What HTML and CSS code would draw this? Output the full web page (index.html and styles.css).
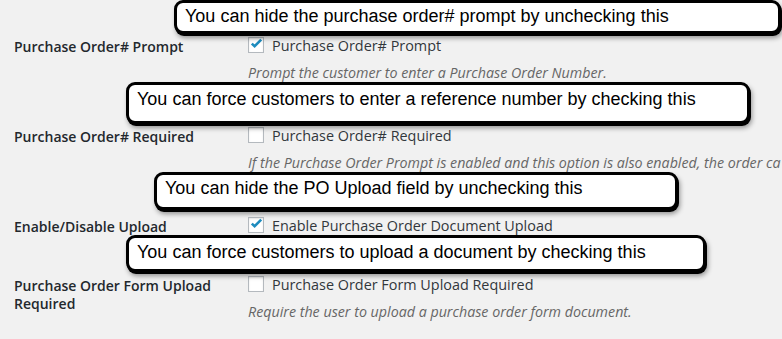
FILE: index.html
```html
<!DOCTYPE html>
<html lang="en">
<head>
    <meta charset="UTF-8">
    <meta name="viewport" content="width=device-width, initial-scale=1.0">
    <title>Purchase Order Settings</title>
    <link rel="stylesheet" href="styles.css">
</head>
<body>
    <div class="page">

        <div class="row">
            <div class="row-label">Purchase Order# Prompt</div>
            <div class="row-field">
                <label class="check">
                    <span class="box checked">
                        <svg viewBox="0 0 16 16" width="16" height="16"><polyline points="3.8,5.6 6.6,8.2 13.2,1.6" fill="none" stroke="#1e8cbe" stroke-width="2.6"/></svg>
                    </span>
                    Purchase Order# Prompt
                </label>
                <p class="desc">Prompt the customer to enter a Purchase Order Number.</p>
            </div>
        </div>

        <div class="row">
            <div class="row-label">Purchase Order# Required</div>
            <div class="row-field">
                <label class="check">
                    <span class="box"></span>
                    Purchase Order# Required
                </label>
                <p class="desc">If the Purchase Order Prompt is enabled and this option is also enabled, the order ca</p>
            </div>
        </div>

        <div class="row row-short">
            <div class="row-label">Enable/Disable Upload</div>
            <div class="row-field">
                <label class="check">
                    <span class="box checked">
                        <svg viewBox="0 0 16 16" width="16" height="16"><polyline points="3.8,5.6 6.6,8.2 13.2,1.6" fill="none" stroke="#1e8cbe" stroke-width="2.6"/></svg>
                    </span>
                    Enable Purchase Order Document Upload
                </label>
            </div>
        </div>

        <div class="row">
            <div class="row-label">Purchase Order Form Upload Required</div>
            <div class="row-field">
                <label class="check">
                    <span class="box"></span>
                    Purchase Order Form Upload Required
                </label>
                <p class="desc">Require the user to upload a purchase order form document.</p>
            </div>
        </div>

        <!-- annotations laid over the screenshot -->
        <div class="note note-1">You can hide the purchase order# prompt by unchecking this</div>
        <div class="note note-2">You can force customers to enter a reference number by checking this</div>
        <div class="note note-3">You can hide the PO Upload field by unchecking this</div>
        <div class="note note-4">You can force customers to upload a document by checking this</div>
    </div>
</body>
</html>
```

FILE: styles.css
```css
body {
    margin: 0;
    background-color: #f1f1f1;
    font-family: "Open Sans", sans-serif;
    color: #444;
    overflow: hidden;
}

.page {
    position: relative;
    padding: 18px 0 0 14px;
    height: 321px;
}

.row {
    display: flex;
    padding: 15px 0 23px;
}

.row-short {
    padding-bottom: 20px;
}

.row-label {
    width: 234px;
    flex-shrink: 0;
    padding-top: 5px;
    font-size: 14px;
    font-weight: 600;
    line-height: 1.3;
    color: #23282d;
}

.row-field {
    min-width: 0;
}

.check {
    display: flex;
    align-items: center;
    height: 24px;
    font-size: 14.4px;
    color: #32373c;
    white-space: nowrap;
}

.box {
    width: 14px;
    height: 14px;
    margin-right: 8px;
    border: 1px solid #b4b9be;
    background: #fff;
    box-shadow: inset 0 1px 2px rgba(0, 0, 0, 0.1);
    position: relative;
}

.box svg {
    position: absolute;
    left: -1px;
    top: 0;
}

.desc {
    margin: 4px 0 0;
    font-size: 14.25px;
    font-style: italic;
    line-height: 24px;
    color: #666;
    white-space: nowrap;
}

.note {
    position: absolute;
    box-sizing: border-box;
    padding: 3px 8px 5px;
    background: #fff;
    border: 3px solid #000;
    border-radius: 9px;
    box-shadow: 1px 2px 0 #000, 2px 4px 5px rgba(0, 0, 0, 0.4);
    font-family: "Liberation Sans", Arial, sans-serif;
    font-size: 18px;
    line-height: 20px;
    color: #000;
    white-space: nowrap;
}

.note-1 {
    left: 174px;
    top: 0;
    width: 607px;
}

.note-2 {
    left: 126px;
    top: 82px;
    width: 624px;
    padding-top: 4px;
    padding-bottom: 12px;
}

.note-3 {
    left: 154px;
    top: 172px;
    width: 524px;
    padding-bottom: 9px;
}

.note-4 {
    left: 126px;
    top: 235px;
    width: 580px;
    padding-top: 4px;
    padding-bottom: 7px;
}
```
